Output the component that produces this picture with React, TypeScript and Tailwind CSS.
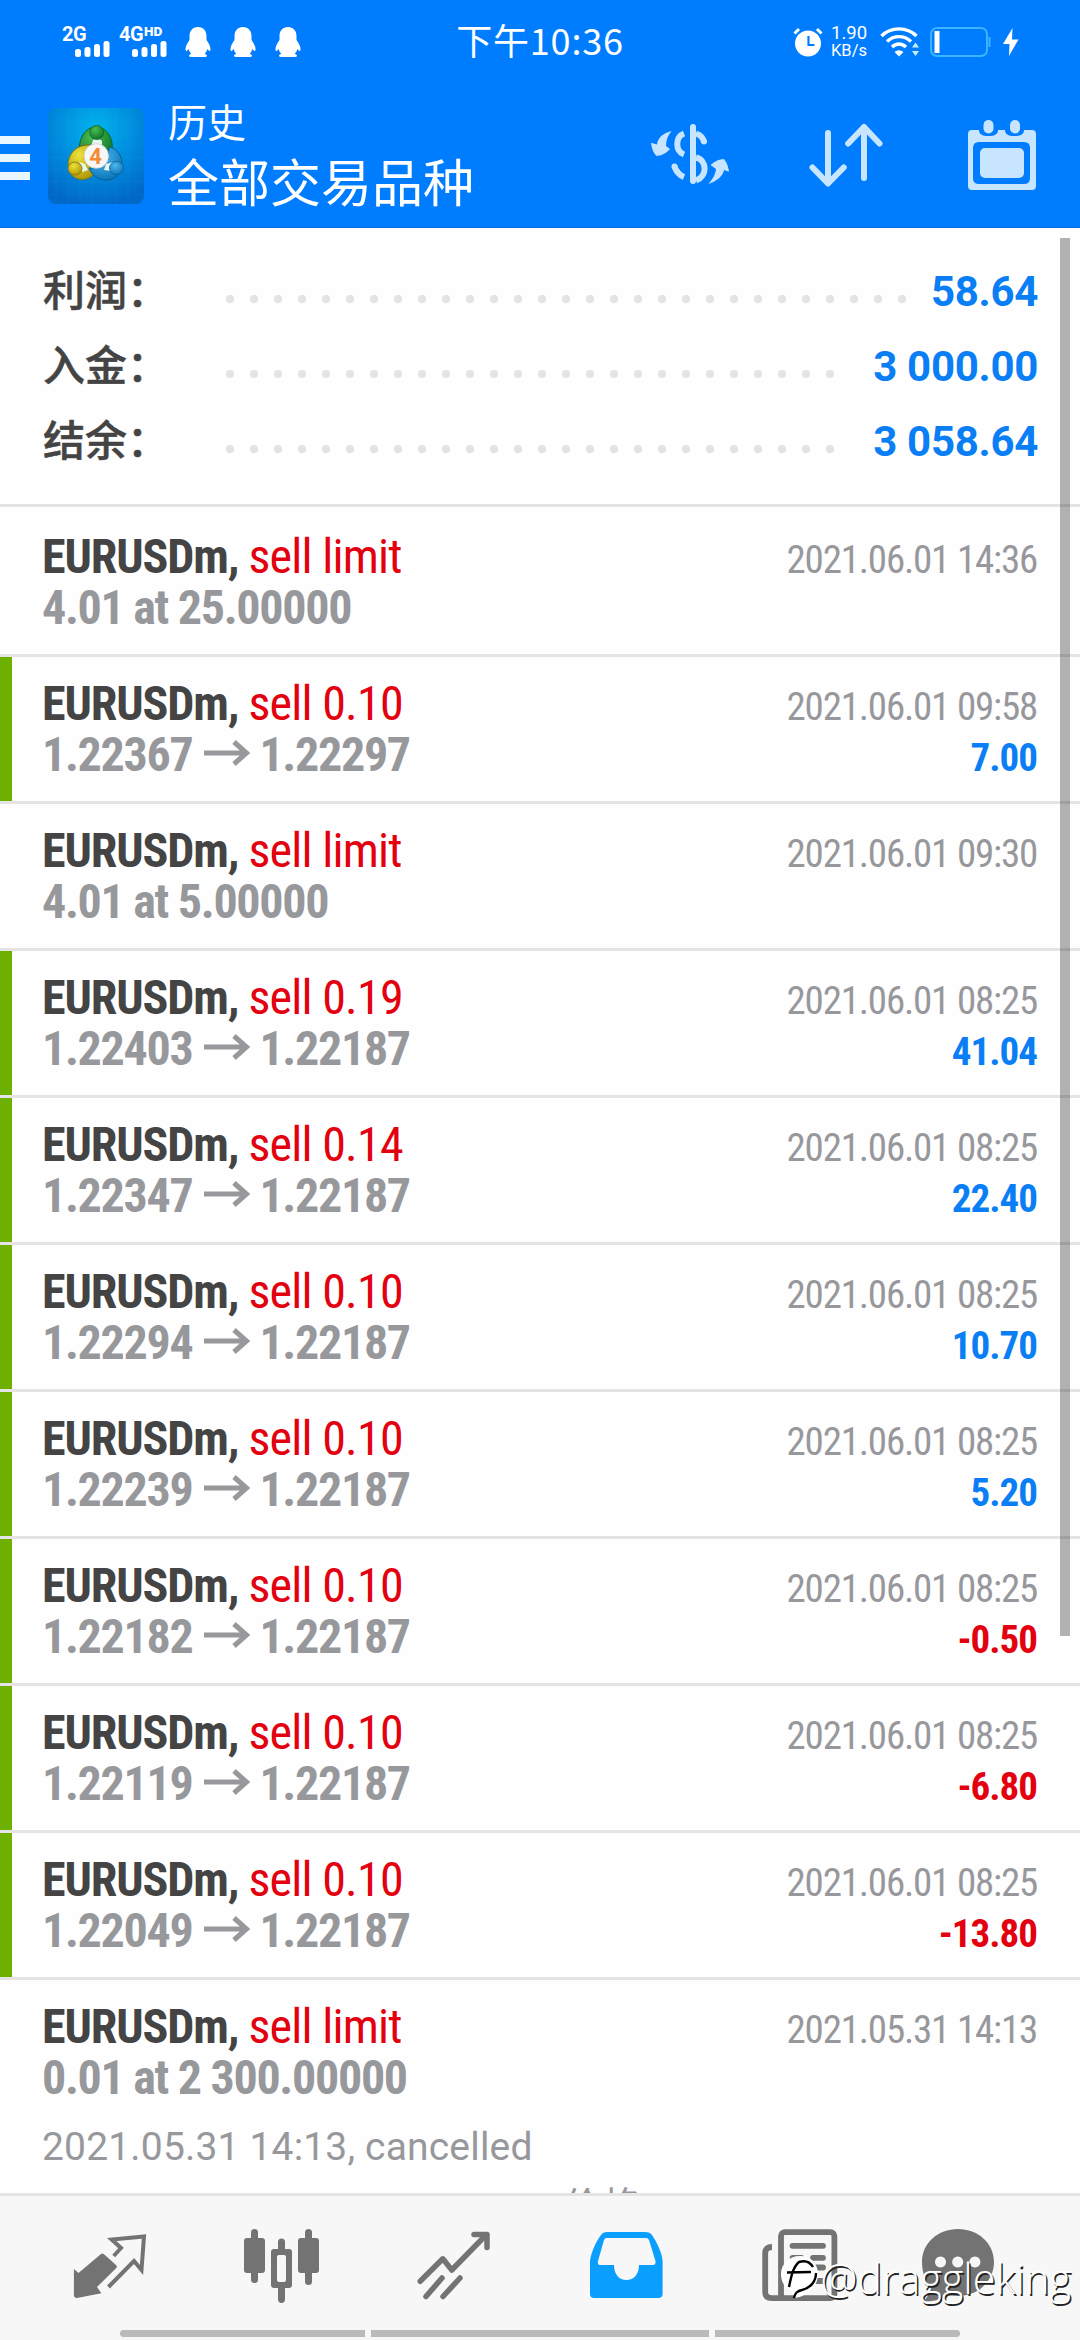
import type { ReactNode } from 'react';
import clsx from 'clsx';

type Deal = {
  action: string;
  price?: string;
  open?: string;
  close?: string;
  time: string;
  profit?: string;
};

const summary = [
  { label: '利润：', value: '58.64', dots: 29 },
  { label: '入金：', value: '3 000.00', dots: 26 },
  { label: '结余：', value: '3 058.64', dots: 26 },
];

const deals: Deal[] = [
  { action: 'sell limit', price: '4.01 at 25.00000', time: '2021.06.01 14:36' },
  { action: 'sell 0.10', open: '1.22367', close: '1.22297', time: '2021.06.01 09:58', profit: '7.00' },
  { action: 'sell limit', price: '4.01 at 5.00000', time: '2021.06.01 09:30' },
  { action: 'sell 0.19', open: '1.22403', close: '1.22187', time: '2021.06.01 08:25', profit: '41.04' },
  { action: 'sell 0.14', open: '1.22347', close: '1.22187', time: '2021.06.01 08:25', profit: '22.40' },
  { action: 'sell 0.10', open: '1.22294', close: '1.22187', time: '2021.06.01 08:25', profit: '10.70' },
  { action: 'sell 0.10', open: '1.22239', close: '1.22187', time: '2021.06.01 08:25', profit: '5.20' },
  { action: 'sell 0.10', open: '1.22182', close: '1.22187', time: '2021.06.01 08:25', profit: '-0.50' },
  { action: 'sell 0.10', open: '1.22119', close: '1.22187', time: '2021.06.01 08:25', profit: '-6.80' },
  { action: 'sell 0.10', open: '1.22049', close: '1.22187', time: '2021.06.01 08:25', profit: '-13.80' },
];

function Signal({ label, hd }: { label: string; hd?: boolean }) {
  return (
    <div className="flex w-[50px] flex-col text-white">
      <div className="flex h-[14px] items-start font-['Roboto'] text-[20px] leading-[14px] font-bold tracking-[-0.500px]">
        <span>{label}</span>
        {hd && <span className="ml-[1px] text-[13.500px] leading-[9px] font-black tracking-normal">HD</span>}
      </div>
      <svg className="h-[16px] w-[50px]" viewBox="0 0 50 16" fill="currentColor">
        <rect x="13" y="8" width="6" height="8" rx="2.5" />
        <rect x="22.5" y="6" width="6" height="10" rx="2.5" />
        <rect x="32" y="3" width="6" height="13" rx="2.5" />
        <rect x="41.5" y="0" width="6" height="16" rx="2.5" />
      </svg>
    </div>
  );
}

function Penguin() {
  return (
    <svg className="h-[30px] w-[26px]" viewBox="0 0 26 30" fill="#fff">
      <path d="M13 0C7.500 0 4.500 4 4.500 9v4C2.500 16 .5 19 .5 22c0 2 .8 2.600 1.500 1.700l1.700-1.700c.4 2 1.300 3.600 2.600 4.800-1.500.6-2.300 1.300-2.300 2 0 .9 1 1.200 3 1.200h12c2 0 3-.3 3-1.200 0-.7-.8-1.400-2.300-2 1.300-1.200 2.200-2.800 2.600-4.800l1.700 1.700c.7.900 1.500.3 1.500-1.700 0-3-2-6-4-9V9c0-5-3-9-8.500-9z" />
    </svg>
  );
}

function StatusBar() {
  return (
    <div className="grid h-[84px] grid-cols-[1fr_auto_1fr] items-center text-white">
      <div className="flex items-center pl-[62px]">
        <Signal label="2G" />
        <div className="w-[7px]" />
        <Signal label="4G" hd />
        <div className="flex gap-[19px] pl-[16px]">
          <Penguin />
          <Penguin />
          <Penguin />
        </div>
      </div>
      <div className="h-[84px] font-['Noto_Sans_CJK_SC',sans-serif] text-[36px] leading-[79px] tracking-[0.800px]">下午10:36</div>
      <div className="flex items-center justify-end pr-[61px]">
        <svg className="h-[30px] w-[30px]" viewBox="0 0 30 30">
          <circle cx="15" cy="16.500" r="13" fill="#fff" />
          <path d="M1.500 6.500 6 2M28.500 6.500 24 2" stroke="#fff" strokeWidth="3" />
          <path d="M15.500 9v9h6" fill="none" stroke="#007dff" strokeWidth="2.200" />
        </svg>
        <div className="ml-[8px] w-[36px] font-['Roboto'] text-[18.500px] leading-[17px]">
          <div>1.90</div>
          <div className="text-[16.500px]">KB/s</div>
        </div>
        <svg className="ml-[13px] h-[30px] w-[40px]" viewBox="0 0 40 30" fill="none" stroke="#fff" strokeWidth="3.400">
          <path d="M1.500 9C11-.5 27-.5 36.500 9M7 14.500c7-6.500 17-6.500 24 0M12 20c4-4 10-4 14 0" />
          <path d="M19 29.500 14.500 25q4.500-3.500 9 0z" fill="#fff" stroke="none" />
          <path d="m35.500 15.500 3.500 5h-7zM35.500 29 39 24h-7z" fill="#c7f0ff" stroke="none" />
        </svg>
        <svg className="ml-[10px] h-[30px] w-[61px]" viewBox="0 0 61 30" fill="none">
          <rect x="1" y="1" width="56" height="28" rx="6" stroke="#3db4ff" strokeWidth="2" />
          <path d="M59.500 10v10" stroke="#3db4ff" strokeWidth="2" />
          <rect x="4.500" y="4" width="5" height="22" fill="#fff" />
        </svg>
        <svg className="ml-[12px] h-[28px] w-[16px]" viewBox="0 0 16 28" fill="#fff">
          <path d="M9.500 0 0 16h6.500L6 28l9.500-16.500H9z" />
        </svg>
      </div>
    </div>
  );
}

function AppLogo() {
  return (
    <svg className="h-[96px] w-[96px]" viewBox="0 0 96 96">
      <defs>
        <radialGradient id="sky" cx="50%" cy="22%" r="80%">
          <stop offset="0" stopColor="#00b4ec" />
          <stop offset="0.55" stopColor="#0089dc" />
          <stop offset="1" stopColor="#0068c6" />
        </radialGradient>
        <radialGradient id="green" cx="40%" cy="30%" r="80%">
          <stop offset="0" stopColor="#4fbb55" />
          <stop offset="1" stopColor="#04701f" />
        </radialGradient>
        <radialGradient id="yellow" cx="40%" cy="30%" r="80%">
          <stop offset="0" stopColor="#eee23a" />
          <stop offset="1" stopColor="#a89000" />
        </radialGradient>
        <radialGradient id="blue" cx="40%" cy="30%" r="80%">
          <stop offset="0" stopColor="#4cb8ee" />
          <stop offset="1" stopColor="#0570b4" />
        </radialGradient>
      </defs>
      <rect width="96" height="96" rx="8" fill="url(#sky)" />
      <path
        d="M8 0v96M20 0v96M32 0v96M44 0v96M56 0v96M68 0v96M80 0v96M0 14h96M0 26h96M0 38h96M0 50h96M0 62h96M0 74h96M0 86h96"
        stroke="#5fd0ff"
        strokeOpacity="0.08"
      />
      <path d="M31 47C30 31 37 19 48 19c11 0 18 11 16 26-2 5-5 7-8 8l-2-12-6-6-9 3-3 7z" fill="url(#green)" stroke="#0b6a2c" />
      <path d="M43 37C29 36 20 45 20 57c0 11 9 16 18 14 4-1 8-4 10-8l-8-7-4-6z" fill="url(#yellow)" stroke="#7d7416" />
      <path d="M41 60c3 8 10 12 17 12 10 0 16-7 16-16 0-8-5-16-13-17l-1 13-8 8z" fill="url(#blue)" stroke="#075f96" />
      <path d="m45 32 4-3 5 4v6H43zM31 54l6 2 3 6-6 2zM66 54l-8 2-2 6 8 1z" fill="#e9f6ee" />
      <circle cx="48.700" cy="24.500" r="7" fill="url(#green)" stroke="#0b6a2c" strokeWidth="0.800" />
      <ellipse cx="27" cy="60.500" rx="7" ry="6.500" fill="url(#yellow)" stroke="#7d7416" strokeWidth="0.800" />
      <ellipse cx="68.500" cy="60" rx="7" ry="6.500" fill="url(#blue)" stroke="#075f96" strokeWidth="0.800" />
      <circle cx="48.300" cy="48" r="12.300" fill="#f7f7f7" stroke="#c9cfd2" strokeWidth="0.800" />
      <text x="47.500" y="56" textAnchor="middle" fill="#f58a33" fontFamily="Roboto" fontSize="22" fontWeight="700">
        4
      </text>
    </svg>
  );
}

function AppBar() {
  return (
    <div className="flex h-[143px] items-start">
      <div className="mt-[52px] flex w-[30px] flex-col gap-[10px]">
        <div className="h-[8px] bg-[#e8f6ff]" />
        <div className="h-[8px] bg-[#e8f6ff]" />
        <div className="h-[8px] bg-[#e8f6ff]" />
      </div>
      <div className="mt-[24px] ml-[18px]">
        <AppLogo />
      </div>
      <div className="mt-[12px] ml-[24px] flex-1 font-['Roboto','Noto_Sans_CJK_SC',sans-serif] text-white">
        <div className="text-[39px] leading-[56px]">历史</div>
        <div className="text-[51px] leading-[66px]">全部交易品种</div>
      </div>
      <div className="mt-[36px] flex gap-[72px] pr-[36px] text-[#c7e5ff]">
        <svg className="h-[70px] w-[84px]" viewBox="0 0 84 70" fill="none" stroke="currentColor" strokeWidth="6">
          <path d="M45 7v54" strokeLinecap="round" />
          <path d="M36 13.500C27 17 27 31 36 34.500" />
          <path d="M48 13.500C53 15 55 18 56 22" />
          <path d="M48 37.500C59 40 60 56 48 60.500" />
          <path d="M26.500 46.500C28 51 31 55 36 57" />
          <circle cx="56" cy="21.500" r="3" fill="currentColor" stroke="none" />
          <circle cx="26.500" cy="46.500" r="3" fill="currentColor" stroke="none" />
          <g fill="currentColor" stroke="none">
            <path d="M23.700 11C15 13 9.500 18 9 24.500L3 22.700Q4 32 8.700 36q8.300-1 13.300-7l-4-3c0-6 2-11 5.700-15z" />
            <path d="M60.300 64c3.700-4 7.200-9 7.700-15l-5.500-4q6.500-6 13.500-6 4 5 5 12.700l-5-1.700c-1 6-7 11-15.700 14z" />
          </g>
        </svg>
        <svg className="h-[70px] w-[84px]" viewBox="0 0 84 70" fill="none" stroke="currentColor" strokeWidth="6" strokeLinecap="round" strokeLinejoin="round">
          <path d="M24 13v50M8.500 47.500 24 63.500l15.700-16M60 58V7M44.200 23.500 60 7l15.500 16.500" />
        </svg>
        <svg className="h-[70px] w-[84px]" viewBox="0 0 84 70" fill="currentColor">
          <path
            fillRule="evenodd"
            d="M12 10h7c0 4 3 6 9.500 6s9.500-2 9.500-6h7c0 4 3 6 9.500 6s9.500-2 9.500-6h8q4 0 4 4v52q0 4-4 4H12q-4 0-4-4V14q0-4 4-4zm7 12q-6 0-6 6v30q0 6 6 6h45q6 0 6-6V28q0-6-6-6z"
          />
          <rect x="20" y="28" width="44" height="30" rx="5" />
          <rect x="23.500" y="0" width="10" height="13.500" rx="5" />
          <rect x="50" y="0" width="10" height="13.500" rx="5" />
        </svg>
      </div>
    </div>
  );
}

function PriceArrow() {
  return (
    <svg className="mr-[9px] ml-[12px] inline-block h-[26px] w-[46px] align-[5px]" viewBox="0 0 46 26" fill="none" stroke="currentColor" strokeWidth="5">
      <path d="M0 13h43M30 2l12.500 11L30 24" />
    </svg>
  );
}

function DealLines({ deal }: { deal: Deal }) {
  return (
    <>
      <div className="flex h-[51px] items-baseline justify-between leading-[51px]">
        <div className="text-[48px] whitespace-pre">
          <span className="font-bold tracking-[-1.100px] text-[#444]">EURUSDm, </span>
          <span className="tracking-[-0.750px] text-[#e3000f]">{deal.action}</span>
        </div>
        <div className="text-[39px] tracking-[-1.200px] text-[#97989c]">{deal.time}</div>
      </div>
      <div className="flex h-[51px] items-baseline justify-between leading-[51px] font-bold">
        <div className="text-[48px] tracking-[-1.300px] whitespace-nowrap text-[#97989c]">
          {deal.price ?? (
            <>
              {deal.open}
              <PriceArrow />
              {deal.close}
            </>
          )}
        </div>
        {deal.profit && (
          <div className={clsx('text-[39px] tracking-[-1px]', deal.profit.startsWith('-') ? 'text-[#e3000f]' : 'text-[#0a7ff5]')}>
            {deal.profit}
          </div>
        )}
      </div>
    </>
  );
}

function NavIcon({ className, children }: { className?: string; children: ReactNode }) {
  return (
    <svg className={clsx('h-[76px] w-[84px] shrink-0', className)} viewBox="0 0 84 76" fill="none">
      {children}
    </svg>
  );
}

function BottomNav() {
  return (
    <nav className="h-[147px] border-t-[3px] border-[#e4e4e4] bg-[#f7f7f7]">
      <div className="flex gap-[88px] pt-[32px] pl-[68px] text-[#737373]">
        <NavIcon>
          <path d="M5.900 41 10.500 45 33 26q1.500-1.200 3 .3L48 37q1.500 1.500.3 3L29 59l4.400 6.300L9 70q-3 0-3.100-3z" fill="currentColor" />
          <path d="m45.700 28 7.300-8-9.300-8.500L76 8.500 73.500 42 66 33 40.500 59" stroke="currentColor" strokeWidth="4" />
        </NavIcon>
        <NavIcon>
          <g fill="currentColor">
            <rect x="4" y="10" width="21" height="35" rx="3" />
            <rect x="11" y="1" width="7" height="54" rx="3.500" />
            <path fillRule="evenodd" d="M34 21h15q3 0 3 3v33q0 3-3 3H34q-3 0-3-3V24q0-3 3-3zm5 6q-2 0-2 2v23q0 2 2 2h5q2 0 2-2V29q0-2-2-2z" />
            <path d="M38 22v-8q0-3.500 3.500-3.500T45 14v8zM38 59v12q0 4 3.500 4t3.500-4V59z" />
            <rect x="58" y="10" width="21" height="35" rx="3" />
            <rect x="65" y="1" width="7" height="56" rx="3.500" />
          </g>
        </NavIcon>
        <NavIcon>
          <g stroke="currentColor" strokeWidth="5.500" strokeLinecap="round">
            <path d="m8.200 53.300 22.600-22.500 9 11.200L73 8" strokeLinejoin="round" />
            <path d="M62 6.500h13v13" strokeLinejoin="round" />
            <path d="m14 68.500 16-18.500M31 68.500 48 50" />
          </g>
        </NavIcon>
        <NavIcon>
          <path
            fill="#0a9eff"
            fillRule="evenodd"
            d="M6 33C7 24 13 12 17 7q2-3 6-3h38q5 0 7 3c4 6 10 17 10.600 26v33q0 4-4.600 4H10q-4 0-4-4zm16-23q-1 0-2 2l-6 21q-1 4 3 4h13c0 9 5 15 12.300 15C50 52 55 46 55 37h14q3 0 2.500-4L65 12q-1-2-3-2z"
          />
        </NavIcon>
        <NavIcon className="ml-[2px]">
          <g stroke="currentColor" strokeWidth="5.800">
            <rect x="23" y="4.200" width="53.400" height="66" rx="4" />
            <path d="M14 19q-6.800 0-6.800 6v39q0 6.200 6.800 6.200h12" />
            <path d="M34.500 17.800H65M55 29.800h10M55 39.500h10M34.500 53H65" strokeLinecap="round" />
          </g>
          <rect x="31.700" y="27" width="14.600" height="15.500" rx="3" fill="currentColor" />
        </NavIcon>
        <NavIcon className="-ml-[14px]">
          <path
            fill="currentColor"
            fillRule="evenodd"
            d="M42 1c20 0 36 14 36 33S62 68 42 68c-3 0-6-.2-9-.8C25 72 16 73.500 7 73.500c4-3 7-9 8-13.500C9 53 6 44 6 34 6 15 22 1 42 1zM24.500 28.500a5.500 5.500 0 1 0 .01 0zm17.200 0a5.500 5.500 0 1 0 .01 0zm17.200 0a5.500 5.500 0 1 0 .01 0z"
          />
        </NavIcon>
      </div>
      <div className="mt-[26px] flex gap-[6px] pl-[120px]">
        <div className="h-[7px] w-[245px] rounded-l-full bg-[#bababa]" />
        <div className="h-[7px] w-[338px] bg-[#bababa]" />
        <div className="h-[7px] w-[245px] rounded-r-full bg-[#bababa]" />
      </div>
    </nav>
  );
}

export default function App() {
  return (
    <div className="relative flex h-[2340px] w-[1080px] flex-col overflow-hidden bg-[#fefefe]">
      <header className="h-[228px] border-b border-[#0068d6] bg-[#007dff]">
        <StatusBar />
        <AppBar />
      </header>

      <main className="flex-1 overflow-hidden">
        {/* Account totals */}
        <section className="h-[279px] border-b-[3px] border-[#e4e4e4] pt-[26px] pr-[42px] pl-[43px] font-['Roboto','Noto_Sans_CJK_SC',sans-serif] text-[42px] leading-[75px]">
          {summary.map((row) => (
            <div key={row.label} className="flex h-[75px]">
              <div className="w-[183px] font-medium text-[#444] [-webkit-text-stroke:0.5px_#444]">{row.label}</div>
              <div className="flex flex-1 gap-[16px] pt-[41px]">
                {Array.from({ length: row.dots }, (_, i) => (
                  <div key={i} className="size-[8px] shrink-0 rounded-full bg-[#e3e3e3]" />
                ))}
              </div>
              <div className="font-bold tracking-[-0.300px] text-[#0a7ff5]">{row.value}</div>
            </div>
          ))}
        </section>

        {/* Deals and orders */}
        <section className="pt-[3px] font-['Roboto_Condensed','Noto_Sans_CJK_SC',sans-serif]">
          {deals.map((deal) => (
            <div key={`${deal.time}${deal.open ?? deal.price}`} className="flex h-[147px] border-b-[3px] border-[#e4e4e4]">
              <div className={clsx('w-[12px]', deal.profit && 'bg-[#6db000]')} />
              <div className="flex-1 pt-[21px] pr-[43px] pl-[30px]">
                <DealLines deal={deal} />
              </div>
            </div>
          ))}
          <div className="pt-[21px] pr-[43px] pl-[42px]">
            <DealLines deal={{ action: 'sell limit', price: '0.01 at 2 300.00000', time: '2021.05.31 14:13' }} />
            <div className="mt-[14px] font-['Roboto','Noto_Sans_CJK_SC',sans-serif] text-[39px] leading-[60px] text-[#97989c]">
              <div className="tracking-[0.170px]">2021.05.31 14:13, cancelled</div>
              <div className="flex">
                <div className="w-[521px] pt-[2px]">S / L:</div>
                <div className="flex-1">价格:</div>
                <div className="pt-[2px]">2 300.00000</div>
              </div>
            </div>
          </div>
        </section>
      </main>

      <BottomNav />

      {/* Scroll thumb */}
      <div className="absolute top-[238px] right-[10px] h-[1398px] w-[10px] bg-black/30" />

      {/* Author mark */}
      <div className="absolute right-[9px] bottom-[39px] flex items-center gap-[2px]">
        <svg className="h-[46px] w-[38px]" viewBox="0 0 38 46" fill="none">
          <path d="M19 1C8 1 0 9 0 19c0 9 5 15 11 17l3 7c8-1 23-8 23-24C37 9 30 1 19 1z" fill="#fff" />
          <path d="M8 32c2-10 4-20 10-25 6-2 11 0 14 5M6 17.500l24-.5M35 18c0 9-6 15-14 17-5 1-7 3-8 8" stroke="#000" strokeWidth="2.400" />
        </svg>
        <span className="font-['Open_Sans',sans-serif] text-[41.500px] leading-[46px] font-light text-white [text-shadow:1.5px_1.5px_0_#222]">@draggleking</span>
      </div>
    </div>
  );
}
